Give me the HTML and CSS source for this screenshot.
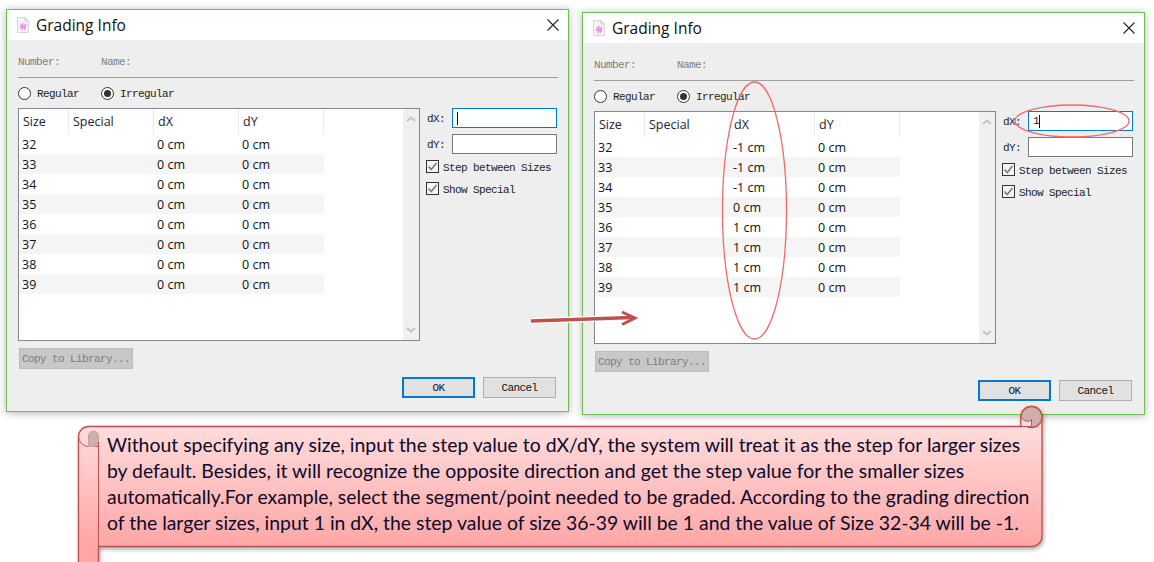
FILE: index.html
```html
<!DOCTYPE html>
<html lang="en">
<head>
  <meta charset="UTF-8">
  <title>Grading Info</title>
  <link rel="stylesheet" href="styles.css">
</head>
<body>
  <div class="dialogs">
    <div class="dialog first">
      <div class="titlebar">
        <svg class="app-icon" width="12" height="16" viewBox="0 0 12 16">
          <path d="M.5.5H8L11.5 4V15.500H.5Z" fill="#f6f3f6" stroke="#d8d4d8"/>
          <path d="M8 .5V4H11.500" fill="#e6e2e6" stroke="#cfcacf"/>
          <path d="M3 11 6 6 5 12 9 7 7 13M3 8 9 11" fill="none" stroke="#ea8ae0" stroke-width="1.200"/>
        </svg>
        <span class="title">Grading Info</span>
        <svg class="close" width="12" height="12" viewBox="0 0 12 12"><path d="M.5.5 11.500 11.500M11.500.5.5 11.500" stroke="#222" stroke-width="1.100"/></svg>
      </div>
      <div class="content">
        <div class="info"><span class="info-a">Number:</span><span>Name:</span></div>
        <div class="radios">
          <span class="radio"></span><span class="radio-label">Regular</span>
          <span class="radio on"></span><span class="radio-text">Irregular</span>
        </div>
        <div class="middle">
          <div class="list">
            <div class="rows">
              <div class="row head"><span class="c-size">Size</span><span class="c-special">Special</span><span class="c-val">dX</span><span class="c-val">dY</span></div>
              <div class="row"><span class="c-size">32</span><span class="c-special"></span><span class="c-val">0 cm</span><span class="c-val">0 cm</span></div>
              <div class="row"><span class="c-size">33</span><span class="c-special"></span><span class="c-val">0 cm</span><span class="c-val">0 cm</span></div>
              <div class="row"><span class="c-size">34</span><span class="c-special"></span><span class="c-val">0 cm</span><span class="c-val">0 cm</span></div>
              <div class="row"><span class="c-size">35</span><span class="c-special"></span><span class="c-val">0 cm</span><span class="c-val">0 cm</span></div>
              <div class="row"><span class="c-size">36</span><span class="c-special"></span><span class="c-val">0 cm</span><span class="c-val">0 cm</span></div>
              <div class="row"><span class="c-size">37</span><span class="c-special"></span><span class="c-val">0 cm</span><span class="c-val">0 cm</span></div>
              <div class="row"><span class="c-size">38</span><span class="c-special"></span><span class="c-val">0 cm</span><span class="c-val">0 cm</span></div>
              <div class="row"><span class="c-size">39</span><span class="c-special"></span><span class="c-val">0 cm</span><span class="c-val">0 cm</span></div>
            </div>
            <div class="scrollbar">
              <svg width="10" height="6" viewBox="0 0 10 6"><path d="M1 5 5 1.500 9 5" fill="none" stroke="#c4c4c4" stroke-width="2"/></svg>
              <svg width="10" height="6" viewBox="0 0 10 6"><path d="M1 1 5 4.500 9 1" fill="none" stroke="#c4c4c4" stroke-width="2"/></svg>
            </div>
          </div>
          <div class="side">
            <div class="field"><span class="field-label">dX:</span><div class="input focus"><span class="caret"></span></div></div>
            <div class="field"><span class="field-label">dY:</span><div class="input"></div></div>
            <div class="check">
              <svg width="13" height="13" viewBox="0 0 13 13"><rect x=".5" y=".5" width="12" height="12" fill="#f4f4f4" stroke="#333"/><path d="M2.500 6.500 5.200 9.500 10.500 3" fill="none" stroke="#777" stroke-width="1.500"/></svg>
              <span>Step between Sizes</span>
            </div>
            <div class="check">
              <svg width="13" height="13" viewBox="0 0 13 13"><rect x=".5" y=".5" width="12" height="12" fill="#f4f4f4" stroke="#333"/><path d="M2.500 6.500 5.200 9.500 10.500 3" fill="none" stroke="#777" stroke-width="1.500"/></svg>
              <span>Show Special</span>
            </div>
          </div>
        </div>
        <div class="copy">Copy to Library...</div>
        <div class="actions">
          <div class="btn default">OK</div>
          <div class="btn">Cancel</div>
        </div>
      </div>
    </div>

    <div class="dialog second">
      <div class="titlebar">
        <svg class="app-icon" width="12" height="16" viewBox="0 0 12 16">
          <path d="M.5.5H8L11.500 4V15.500H.5Z" fill="#f6f3f6" stroke="#d8d4d8"/>
          <path d="M8 .5V4H11.500" fill="#e6e2e6" stroke="#cfcacf"/>
          <path d="M3 11 6 6 5 12 9 7 7 13M3 8 9 11" fill="none" stroke="#ea8ae0" stroke-width="1.200"/>
        </svg>
        <span class="title">Grading Info</span>
        <svg class="close" width="12" height="12" viewBox="0 0 12 12"><path d="M.5.5 11.500 11.500M11.500.5.5 11.500" stroke="#222" stroke-width="1.100"/></svg>
      </div>
      <div class="content">
        <div class="info"><span class="info-a">Number:</span><span>Name:</span></div>
        <div class="radios">
          <span class="radio"></span><span class="radio-label">Regular</span>
          <span class="radio on"></span><span class="radio-text">Irregular</span>
        </div>
        <div class="middle">
          <div class="list">
            <div class="rows">
              <div class="row head"><span class="c-size">Size</span><span class="c-special">Special</span><span class="c-val">dX</span><span class="c-val">dY</span></div>
              <div class="row"><span class="c-size">32</span><span class="c-special"></span><span class="c-val">-1 cm</span><span class="c-val">0 cm</span></div>
              <div class="row"><span class="c-size">33</span><span class="c-special"></span><span class="c-val">-1 cm</span><span class="c-val">0 cm</span></div>
              <div class="row"><span class="c-size">34</span><span class="c-special"></span><span class="c-val">-1 cm</span><span class="c-val">0 cm</span></div>
              <div class="row"><span class="c-size">35</span><span class="c-special"></span><span class="c-val">0 cm</span><span class="c-val">0 cm</span></div>
              <div class="row"><span class="c-size">36</span><span class="c-special"></span><span class="c-val">1 cm</span><span class="c-val">0 cm</span></div>
              <div class="row"><span class="c-size">37</span><span class="c-special"></span><span class="c-val">1 cm</span><span class="c-val">0 cm</span></div>
              <div class="row"><span class="c-size">38</span><span class="c-special"></span><span class="c-val">1 cm</span><span class="c-val">0 cm</span></div>
              <div class="row"><span class="c-size">39</span><span class="c-special"></span><span class="c-val">1 cm</span><span class="c-val">0 cm</span></div>
            </div>
            <div class="scrollbar">
              <svg width="10" height="6" viewBox="0 0 10 6"><path d="M1 5 5 1.500 9 5" fill="none" stroke="#c4c4c4" stroke-width="2"/></svg>
              <svg width="10" height="6" viewBox="0 0 10 6"><path d="M1 1 5 4.500 9 1" fill="none" stroke="#c4c4c4" stroke-width="2"/></svg>
            </div>
          </div>
          <div class="side">
            <div class="field"><span class="field-label">dX:</span><div class="input focus">1<span class="caret"></span></div></div>
            <div class="field"><span class="field-label">dY:</span><div class="input"></div></div>
            <div class="check">
              <svg width="13" height="13" viewBox="0 0 13 13"><rect x=".5" y=".5" width="12" height="12" fill="#f4f4f4" stroke="#333"/><path d="M2.500 6.500 5.200 9.500 10.500 3" fill="none" stroke="#777" stroke-width="1.500"/></svg>
              <span>Step between Sizes</span>
            </div>
            <div class="check">
              <svg width="13" height="13" viewBox="0 0 13 13"><rect x=".5" y=".5" width="12" height="12" fill="#f4f4f4" stroke="#333"/><path d="M2.500 6.500 5.200 9.500 10.500 3" fill="none" stroke="#777" stroke-width="1.500"/></svg>
              <span>Show Special</span>
            </div>
          </div>
        </div>
        <div class="copy">Copy to Library...</div>
        <div class="actions">
          <div class="btn default">OK</div>
          <div class="btn">Cancel</div>
        </div>
      </div>
    </div>
  </div>

  <div class="callout">
    <svg class="scroll" width="966" height="160" viewBox="0 0 966 160">
      <defs>
        <linearGradient id="scrollFill" gradientUnits="userSpaceOnUse" x1="0" y1="20" x2="0" y2="141">
          <stop offset="0" stop-color="#ffdcdc"/>
          <stop offset="1" stop-color="#ffa6a6"/>
        </linearGradient>
      </defs>
      <path d="M10.500 20.500H943V11A10.500 10.500 0 0 1 964 11V130.500A10 10 0 0 1 954 140.500H20.500V165H.5V30.500A10 10 0 0 1 10.500 20.500Z" fill="url(#scrollFill)" stroke="#c0504d" stroke-width="1.300"/>
      <circle cx="953.500" cy="11" r="10.500" fill="#d0aeae" stroke="#c0504d" stroke-width="1.300"/>
      <path d="M943 11V20.500H953.500V13.500C951 17 945 15 943 11Z" fill="#ffdcdc" stroke="#c0504d" stroke-width="1"/>
      <path d="M.5 30.500A10 10 0 0 0 10.500 40.500H20.500" fill="none" stroke="#c0504d" stroke-width="1"/>
      <path d="M10.500 40.500V30C10.500 27 13 25 15.500 25 18 25 20.500 27 20.500 30V36C20.500 39 18 40.500 15 40.500Z" fill="#d0aeae" stroke="#c8a0a0"/>
      <path d="M20.500 36V140" fill="none" stroke="#c0504d" stroke-width="1"/>
    </svg>
    <p class="callout-text">
      <span>Without specifying any size, input the step value to dX/dY, the system will treat it as the step for larger sizes</span>
      <span>by default. Besides, it will recognize the opposite direction and get the step value for the smaller sizes</span>
      <span>automatically.For example, select the segment/point needed to be graded. According to the grading direction</span>
      <span>of the larger sizes, input 1 in dX, the step value of size 36-39 will be 1 and the value of Size 32-34 will be -1.</span>
    </p>
  </div>

  <!-- red marks drawn over the screenshots -->
  <svg class="marks" width="1154" height="562" viewBox="0 0 1154 562">
    <path class="halo" d="M531 321 632 317.500"/>
    <path class="arrow" d="M531 321 632 317.500"/>
    <path class="arrow-head" d="M622 312 635 318 622 324.500"/>
    <ellipse class="ring" cx="754.500" cy="210.500" rx="32" ry="128.500"/>
    <ellipse class="ring" cx="1072" cy="121" rx="57" ry="16"/>
  </svg>
</body>
</html>
```

FILE: styles.css
```css
html, body { margin: 0; padding: 0; }
body {
  position: relative;
  width: 1154px;
  height: 562px;
  overflow: hidden;
  background-color: white;
  font-family: "Open Sans", sans-serif;
  color: #111;
}

.dialogs { display: flex; align-items: flex-start; }
.dialog {
  box-sizing: border-box;
  width: 563px;
  height: 403px;
  background-color: #eeeeee;
  border: 1px solid #6dbf55;
  box-shadow: 0 1px 8px rgba(0,0,0,0.3);
}
.first { margin: 9px 0 0 6px; }
.second { margin: 12px 0 0 13px; }

.titlebar {
  display: flex;
  align-items: center;
  height: 30px;
  padding: 0 9px 0 10px;
  background-color: white;
}
.app-icon { flex: none; }
.title { margin-left: 7px; font-size: 15.500px; color: #111; }
.close { margin-left: auto; }

.content {
  padding: 0 10px 0 11px;
  font-family: "Liberation Mono", monospace;
  font-size: 11px;
  letter-spacing: -0.6px;
}

.info {
  display: flex;
  height: 38px;
  padding-top: 16px;
  box-sizing: border-box;
  line-height: 13px;
  color: #808080;
  border-bottom: 1px solid #a0a0a0;
}
.info-a { width: 83px; }

.radios { display: flex; align-items: center; height: 30px; color: #222; }
.radio {
  box-sizing: border-box;
  position: relative;
  width: 13px;
  height: 13px;
  margin-right: 6px;
  border: 1px solid #333;
  border-radius: 50%;
  background-color: white;
}
.radio.on::after {
  content: "";
  position: absolute;
  left: 2px;
  top: 2px;
  width: 7px;
  height: 7px;
  border-radius: 50%;
  background-color: #333;
}
.radio-label { width: 64px; padding-top: 2px; }
.radio-text { padding-top: 2px; }

.middle { display: flex; }
.list {
  box-sizing: border-box;
  display: flex;
  width: 402px;
  height: 233px;
  border: 1px solid #828790;
  background-color: white;
}
.rows {
  width: 384px;
  font-family: "Open Sans", sans-serif;
  font-size: 12.500px;
  letter-spacing: 0;
}
.row { display: flex; width: 305px; height: 20px; line-height: 22px; color: #111; }
.row:nth-child(odd) { background-color: #f5f5f5; }
.row span { box-sizing: border-box; padding-left: 3px; }
.row.head { height: 25px; line-height: 26px; background-color: white; color: #223; }
.row.head span { padding-left: 4px; border-right: 1px solid #e8e8e8; }
.c-size { width: 50px; }
.c-special { width: 85px; }
.c-val { width: 85px; }

.scrollbar {
  display: flex;
  flex-direction: column;
  justify-content: space-between;
  align-items: center;
  width: 16px;
  padding: 7px 0;
  box-sizing: border-box;
  background-color: #f0f0f0;
}

.side { margin-left: 7px; flex: 1; color: #222; }
.field { display: flex; align-items: center; height: 20px; margin-bottom: 6px; }
.field-label { width: 25px; flex: none; padding-top: 2px; }
.input {
  box-sizing: border-box;
  display: flex;
  align-items: center;
  width: 105px;
  height: 20px;
  padding-left: 4px;
  background-color: white;
  border: 1px solid #7a7a7a;
  color: #111;
}
.input.focus { border-color: #0078d7; }
.caret { display: block; width: 1px; height: 13px; background-color: #111; }
.check { display: flex; align-items: center; height: 13px; margin-bottom: 9px; margin-left: -1px; }
.check:first-of-type { margin-top: 1px; }
.check span { margin-left: 4px; padding-top: 3px; }

.copy {
  box-sizing: border-box;
  width: 114px;
  height: 21px;
  margin: 7px 0 0 1px;
  padding-left: 2px;
  line-height: 21px;
  background-color: #c8c8c8;
  border: 1px solid #bcbcbc;
  color: #7d7d7d;
}

.actions { display: flex; justify-content: flex-end; gap: 8px; margin: 8px 2px 0 0; }
.btn {
  box-sizing: border-box;
  width: 73px;
  height: 21px;
  line-height: 21px;
  text-align: center;
  background-color: #e1e1e1;
  border: 1px solid #adadad;
  color: #111;
}
.btn.default { border: 2px solid #0078d7; line-height: 19px; }

.callout {
  position: relative;
  width: 966px;
  margin: -9px 0 0 78px;
}
.scroll {
  position: absolute;
  left: 0;
  top: 0;
  overflow: visible;
  filter: drop-shadow(1px 2px 2px rgba(0,0,0,0.35));
}
.callout-text {
  position: relative;
  margin: 0;
  padding: 26px 0 0 29px;
  font-family: "Lato", sans-serif;
  font-size: 19.400px;
  line-height: 26px;
  color: #0a0a2a;
  white-space: nowrap;
}
.callout-text span { display: block; }

.marks { position: absolute; left: 0; top: 0; pointer-events: none; }
.halo { fill: none; stroke: white; stroke-width: 6; }
.arrow { fill: none; stroke: #c0504d; stroke-width: 3.500; }
.arrow-head { fill: none; stroke: #c0504d; stroke-width: 3; }
.ring { fill: none; stroke: #f26a6a; stroke-width: 1.300; }
```
